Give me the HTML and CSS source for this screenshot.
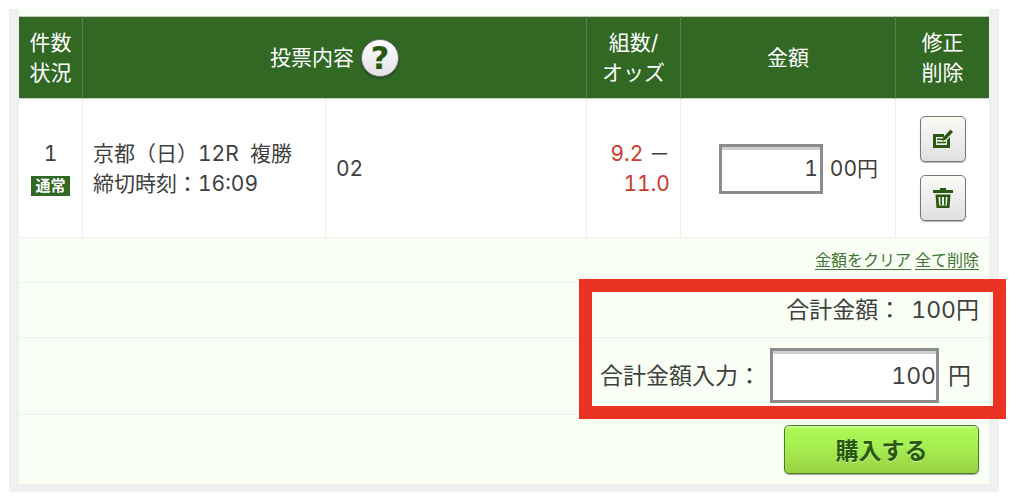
FILE: index.html
```html
<!DOCTYPE html>
<html lang="ja">
<head>
  <meta charset="UTF-8">
  <meta name="viewport" content="width=device-width, initial-scale=1.0">
  <title>投票内容</title>
  <link rel="stylesheet" href="styles.css">
</head>
<body>

<form class="vote-list">
  <table class="vote-table">
    <colgroup>
      <col class="col-count">
      <col class="col-race">
      <col class="col-number">
      <col class="col-odds">
      <col class="col-amount">
      <col class="col-edit">
    </colgroup>
    <thead>
      <tr>
        <th>件数<br>状況</th>
        <th colspan="2">
          <div class="head-content">
            投票内容
            <button type="button" class="help" aria-label="ヘルプ">?</button>
          </div>
        </th>
        <th>組数/<br>オッズ</th>
        <th>金額</th>
        <th>修正<br>削除</th>
      </tr>
    </thead>
    <tbody>
      <tr>
        <td class="count">1<br><span class="status">通常</span></td>
        <td>京都（日）12R&nbsp; 複勝<br>締切時刻：16:09</td>
        <td>02</td>
        <td class="odds"><span class="red">9.2</span> －<br><span class="red">11.0</span></td>
        <td>
          <div class="amount">
            <input type="text" id="amount" class="amount-input" value="1">
            <label for="amount">00円</label>
          </div>
        </td>
        <td>
          <div class="actions">
            <button type="button" class="icon-button" aria-label="修正">
              <svg width="22" height="22" viewBox="0 0 22 22">
                <path d="M1 6h11v3H4v8h11v-5l3-3v11H1z" fill="#28590f"/>
                <path d="M5 11.200h6M5 14.500h9" stroke="#28590f" stroke-width="1.400"/>
                <path d="M10 13l1.500-4L18.500 1.500 21 4l-7 7.500z" fill="#28590f"/>
              </svg>
            </button>
            <button type="button" class="icon-button" aria-label="削除">
              <svg width="22" height="22" viewBox="0 0 22 22">
                <path d="M8 1h6v2h7v3H1V3h7z" fill="#28590f"/>
                <path d="M3.500 7.500h15l-1 13.500h-13zM6.500 10l.6 8.500h7.800l.6-8.500z" fill="#28590f" fill-rule="evenodd"/>
                <path d="M9.200 10v8M12.800 10v8" stroke="#28590f" stroke-width="1.600"/>
              </svg>
            </button>
          </div>
        </td>
      </tr>
    </tbody>
  </table>

  <div class="row links">
    <a href="#">金額をクリア</a>
    <a href="#">全て削除</a>
  </div>

  <div class="totals">
    <div class="row total">
      <span>合計金額：</span>
      <span>100円</span>
    </div>
    <div class="row total-entry">
      <label for="total">合計金額入力：</label>
      <input type="text" id="total" class="total-input" value="100">
      <span>円</span>
    </div>
    <div class="highlight"></div>
  </div>

  <div class="row submit">
    <button type="submit" class="buy">購入する</button>
  </div>
</form>

</body>
</html>
```

FILE: styles.css
```css
* {
  box-sizing: border-box;
}
body {
  margin: 0;
  padding: 9px 25px 11px 9px;
  background-color: #fff;
  color: #404040;
  font-family: Inter, "Noto Sans CJK JP", sans-serif;
  font-size: 21px;
  font-variant-numeric: tabular-nums;
  line-height: 30px;
}
input,
button {
  font-family: inherit;
  font-variant-numeric: inherit;
  color: inherit;
}
.vote-list {
  padding-top: 7px;
  border: solid #f0f0f0;
  border-width: 0 10px 8px;
  background-color: #f9fff4;
}

/* vote table */
.vote-table {
  width: 100%;
  table-layout: fixed;
  border-collapse: separate;
  border-spacing: 0;
}
.col-count {
  width: 64px;
}
.col-race {
  width: 243px;
}
.col-odds {
  width: 94px;
}
.col-amount {
  width: 215px;
}
.col-edit {
  width: 93px;
}
th {
  padding: 11px 0 10px;
  background-color: #316824;
  border-top: 1px solid #bfc8bb;
  border-bottom: 1px solid #c8cec5;
  border-right: 1px solid #56834c;
  color: #fff;
  font-weight: normal;
}
td {
  padding: 17px 10px 16px;
  background-color: #fff;
  border-right: 1px solid #f0f0ee;
}
th:last-child,
td:last-child {
  border-right: none;
}
.head-content {
  display: flex;
  align-items: center;
  justify-content: center;
  gap: 7px;
}
.help {
  width: 38px;
  height: 38px;
  padding: 0;
  border: 1px solid #77727a;
  border-radius: 50%;
  background: linear-gradient(#fff, #e2e2e4);
  box-shadow: 0 1px 2px rgba(0, 0, 0, 0.5);
  color: #28590f;
  font-family: "DejaVu Sans", sans-serif;
  font-size: 32px;
  font-weight: bold;
  line-height: 36px;
}
.count {
  padding-left: 0;
  padding-right: 0;
  text-align: center;
}
.status {
  display: inline-block;
  padding: 0 4px;
  background-color: #316824;
  color: #fff;
  font-size: 15px;
  font-weight: bold;
  line-height: 20px;
}
.odds {
  text-align: right;
}
.red {
  color: #cb3a2e;
}
.amount {
  display: flex;
  align-items: center;
  justify-content: flex-end;
  gap: 7px;
  padding-right: 7px;
}
.amount-input,
.total-input {
  border: 3px solid #8c8c8c;
  border-radius: 0;
  background-color: #fff;
  box-shadow: inset 0 3px 0 #cfcfcf;
  text-align: right;
}
.amount-input {
  width: 104px;
  height: 50px;
  padding: 0 2px;
  font-size: 21px;
}
.actions {
  display: flex;
  flex-direction: column;
  align-items: center;
  gap: 13px;
}
.icon-button {
  display: flex;
  align-items: center;
  justify-content: center;
  width: 46px;
  height: 46px;
  padding: 0;
  border: 1px solid #777;
  border-radius: 5px;
  background: linear-gradient(#f9faf2, #f0f0f0 40%, #e0e0e0);
  box-shadow: 0 1px 1px rgba(0, 0, 0, 0.3);
}

/* rows under the table */
.row {
  display: flex;
  align-items: center;
  justify-content: flex-end;
  padding: 7px 10px;
  border-top: 1px solid #eff1ed;
}
.links {
  gap: 4px;
  font-size: 16px;
}
.links a {
  color: #3f7534;
  text-underline-offset: 3px;
}
.totals {
  position: relative;
  font-size: 23px;
}
.total {
  gap: 10px;
  padding-top: 12px;
  padding-bottom: 12px;
}
.total-entry {
  gap: 9px;
  padding: 10px 18px 11px;
}
.total-input {
  width: 169px;
  height: 55px;
  padding: 0;
  font-size: 23px;
}
.highlight {
  position: absolute;
  top: -3px;
  right: -17px;
  bottom: -5px;
  width: 427px;
  border: 13px solid #ea3323;
  pointer-events: none;
}
.submit {
  padding-top: 10px;
  padding-bottom: 10px;
}
.buy {
  width: 195px;
  height: 49px;
  padding: 0 0 2px;
  border: 1px solid #4c7a2c;
  border-radius: 5px;
  background: linear-gradient(#adfb57, #a6ee50 45%, #99d143);
  box-shadow: 0 1px 1px rgba(0, 0, 0, 0.35), inset 0 2px 1px #c6fd88;
  color: #28590f;
  font-size: 23px;
  font-weight: bold;
  text-shadow: 0 1px 0 #d3f7a6;
}
```
